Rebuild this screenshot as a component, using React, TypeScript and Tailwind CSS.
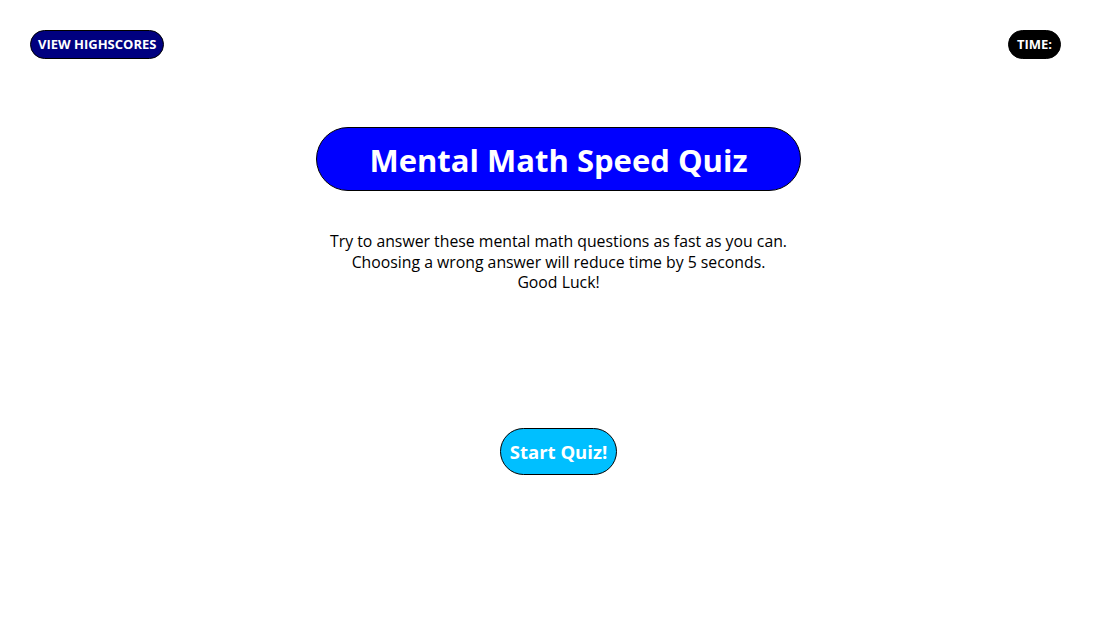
import React from "react";

export default function App() {
  return (
    <main
      className="min-h-[630px] bg-white text-black"
      style={{ fontFamily: '"Open Sans", "Noto Sans CJK KR", sans-serif' }}
    >
      {/* HEADER */}
      <header className="flex justify-between items-start px-[30px] pt-[30px]">
        <button className="h-[29px] px-[7px] rounded-full border border-black bg-[#000080] text-white text-[13px] font-bold uppercase leading-none">
          View Highscores
        </button>
        <div className="h-[29px] px-[8px] mr-[20px] flex items-center rounded-full border border-black bg-black text-white text-[13px] font-bold leading-none">
          TIME:
        </div>
      </header>

      {/* INTRO */}
      <section className="flex flex-col items-center pl-[6px]">
        <h1 className="mt-[68px] w-[485px] h-[64px] flex items-center justify-center rounded-full border border-black bg-[#0000ff] text-white text-[31px] font-bold pt-[2px]">
          Mental Math Speed Quiz
        </h1>
        <p className="mt-[40px] text-center text-[15.8px] leading-[20.5px]">
          Try to answer these mental math questions as fast as you can.
          <br />
          Choosing a wrong answer will reduce time by 5 seconds.
          <br />
          Good Luck!
        </p>
        <button className="mt-[135px] w-[117px] h-[47px] rounded-full border border-black bg-[#00bfff] text-white text-[18.5px] font-bold pt-[2px]">
          Start Quiz!
        </button>
      </section>
    </main>
  );
}
